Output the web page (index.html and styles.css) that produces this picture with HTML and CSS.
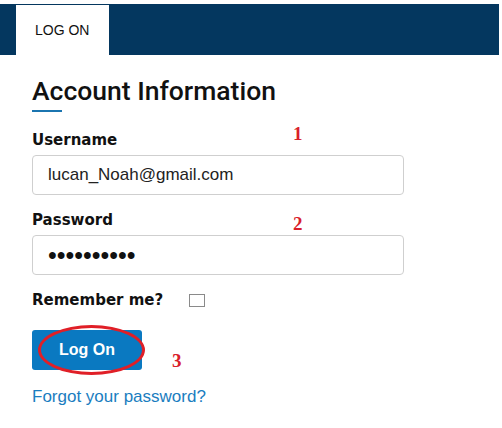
FILE: index.html
```html
<!DOCTYPE html>
<html>
<head>
<meta charset="utf-8">
<link rel="stylesheet" href="styles.css">
</head>
<body>
<header class="topbar">
  <div class="tab">LOG ON</div>
</header>
<main class="main">
  <h1 class="title">Account Information</h1>
  <div class="accent"></div>
  <form class="form">
    <div class="field">
      <label class="label" for="user">Username</label>
      <input class="input" id="user" type="text" value="lucan_Noah@gmail.com">
    </div>
    <div class="field">
      <label class="label" for="pass">Password</label>
      <input class="input input-pass" id="pass" type="password" value="abcdefghij">
    </div>
    <div class="remember">
      <label class="label" for="rem">Remember me?</label>
      <input class="check" id="rem" type="checkbox">
    </div>
    <div class="action">
      <button class="btn" type="button">Log On</button>
      <span class="ring"></span>
    </div>
    <a class="forgot" href="#">Forgot your password?</a>
  </form>
  <span class="note note-1">1</span>
  <span class="note note-2">2</span>
  <span class="note note-3">3</span>
</main>
</body>
</html>
```
FILE: styles.css
```css
* { box-sizing: border-box; }
html, body { margin: 0; padding: 0; background: #fff; }
body {
  font-family: "Liberation Sans", Arial, sans-serif;
  color: #111;
  padding-top: 4px;
}
.topbar {
  height: 51px;
  margin-right: 3px;
  background: #04375f;
  display: flex;
  align-items: stretch;
  padding-top: 1px;
}
.tab {
  margin-left: 16px;
  width: 93px;
  background: #fff;
  display: flex;
  align-items: center;
  padding-left: 19px;
  font-size: 14px;
  color: #111;
}
.main {
  position: relative;
  padding: 20px 0 0 32px;
}
.title {
  margin: 0;
  font-family: Roboto, sans-serif;
  font-weight: 500;
  font-size: 26.5px;
  line-height: 32px;
  color: #111;
}
.accent {
  width: 30px;
  height: 2px;
  margin-top: 3px;
  background: #1b75b0;
}
.form {
  display: flex;
  flex-direction: column;
  align-items: flex-start;
  padding-top: 19px;
}
.field {
  display: flex;
  flex-direction: column;
  gap: 6px;
  margin-bottom: 16px;
}
.label {
  font-family: "DejaVu Sans", sans-serif;
  font-weight: bold;
  font-size: 15px;
  line-height: 18px;
  color: #111;
}
.input {
  width: 372px;
  height: 40px;
  border: 1px solid #cfcfcf;
  border-radius: 4px;
  padding: 0 15px;
  font-family: "Liberation Sans", Arial, sans-serif;
  font-size: 17px;
  color: #222;
  background: #fff;
  outline: none;
}
.input-pass {
  font-size: 25px;
  color: #111;
}
.remember {
  display: flex;
  align-items: center;
  gap: 26px;
}
.check {
  appearance: none;
  -webkit-appearance: none;
  margin: 0;
  width: 16px;
  height: 13px;
  border: 1px solid #8a8a8a;
  background: #fff;
}
.action {
  position: relative;
  margin-top: 21px;
}
.btn {
  display: block;
  width: 110px;
  height: 40px;
  border: none;
  border-radius: 3px;
  background: #0a79c1;
  color: #fff;
  font-family: "Liberation Sans", Arial, sans-serif;
  font-weight: bold;
  font-size: 16px;
  padding: 0;
}
.ring {
  position: absolute;
  left: 6px;
  top: -5px;
  width: 107px;
  height: 50px;
  border: 3px solid #e01f27;
  border-radius: 50%;
}
.forgot {
  margin-top: 17px;
  font-size: 17px;
  line-height: 20px;
  color: #1a7dc0;
  text-decoration: none;
}
.note {
  position: absolute;
  font-family: "Liberation Serif", serif;
  font-weight: bold;
  font-size: 19px;
  line-height: 19px;
  color: #d9202a;
}
.note-1 { left: 293px; top: 69px; }
.note-2 { left: 293px; top: 159px; }
.note-3 { left: 172px; top: 296px; }
```
